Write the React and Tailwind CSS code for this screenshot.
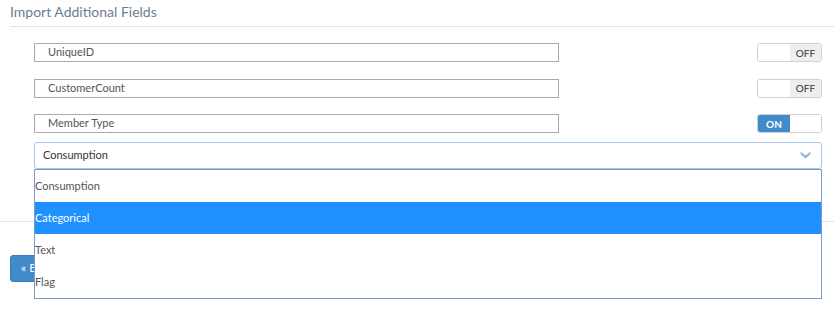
import React from 'react';

const fields = [
    { name: 'UniqueID', on: false },
    { name: 'CustomerCount', on: false },
    { name: 'Member Type', on: true },
];

const options = ['Consumption', 'Categorical', 'Text', 'Flag'];

function Toggle({ on }) {
    return (
        <div className="w-[65px] h-[19px] border border-[#cfcfcf] rounded-[3px] flex overflow-hidden text-[10px] leading-none">
            {on ? (
                <>
                    <div className="w-[32px] bg-[#428bca] text-white font-bold flex items-center justify-center">ON</div>
                    <div className="flex-1 bg-white" />
                </>
            ) : (
                <>
                    <div className="w-[32px] bg-white" />
                    <div className="flex-1 bg-[#eeeeee] text-[#333] flex items-center justify-center">OFF</div>
                </>
            )}
        </div>
    );
}

export default function App() {
    return (
        <div className="w-[834px] h-[311px] bg-white relative overflow-hidden" style={{ fontFamily: 'Lato, "Open Sans", sans-serif' }}>
            <div className="ml-[10px] h-[27px] border-b border-[#e3e3e3] flex items-center">
                <h3 className="text-[14px] text-[#6d7d8e] leading-none -mt-[3px]">Import Additional Fields</h3>
            </div>

            <div className="pl-[34px] pr-[12px] pt-[16px]">
                {fields.map((f, i) => (
                    <div key={f.name} className={`flex items-center justify-between h-[19px] ${i > 0 ? 'mt-[16.5px]' : ''}`}>
                        <div className="w-[525px] h-[19px] border border-[#a9a9a9] pl-[13px] flex items-center text-[11px] text-[#555]">
                            {f.name}
                        </div>
                        <Toggle on={f.on} />
                    </div>
                ))}

                <div className="mt-[9px] h-[27px] border border-[#a6c8f0] rounded-[3px] flex items-center justify-between pl-[8px] pr-[10px] text-[11px] text-[#333]">
                    <span>Consumption</span>
                    <svg width="11" height="7" viewBox="0 0 11 7" fill="none">
                        <path d="M1.5 1.5 L5.5 5 L9.5 1.5" stroke="#8fb1e6" strokeWidth="2.2" strokeLinecap="round" />
                    </svg>
                </div>
            </div>

            <div className="mt-[52px] border-t border-[#e3e3e3]" />
            <div className="mt-[32px] ml-[10px]">
                <button className="h-[27px] px-[10px] bg-[#428bca] border border-[#357ebd] rounded-[3px] text-white text-[12px]">« Back</button>
            </div>

            <ul className="absolute left-[34px] top-[169px] w-[788px] h-[130px] border border-[#7a99d3] bg-white text-[11px] text-[#555]">
                {options.map(o => (
                    <li key={o} className={`h-[32px] flex items-center ${o === 'Categorical' ? 'bg-[#1e90ff] text-white' : ''}`}>
                        {o}
                    </li>
                ))}
            </ul>
        </div>
    );
}
